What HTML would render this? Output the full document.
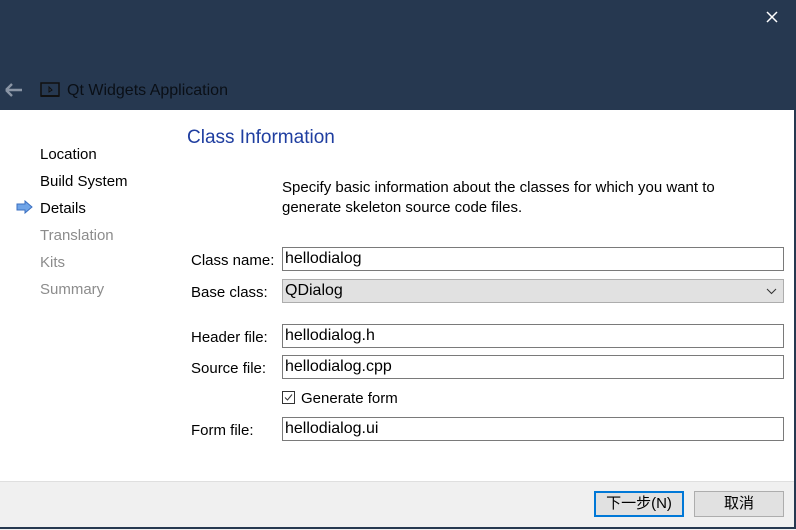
<!DOCTYPE html><html><head><meta charset="utf-8"><style>
body{margin:0;width:796px;height:529px;position:relative;overflow:hidden;background:#fff;font-family:"Liberation Sans","Noto Sans CJK SC",sans-serif;font-size:15px;color:#000}
.a{position:absolute}
.hdr{left:0;top:0;width:796px;height:110px;background:#263850}
.in{position:absolute;left:282px;width:500px;height:22px;border:1px solid #7a7a7a;background:#fff;box-sizing:content-box}
.in span{position:absolute;left:2px;top:2px;font-size:16px}
.lbl{position:absolute;left:191px;font-size:15px}
.nav{position:absolute;left:40px;font-size:15px}
.btn{position:absolute;top:491px;height:26px;width:90px;box-sizing:border-box;background:#e1e1e1;border:1px solid #adadad;text-align:center;line-height:24px;font-size:15px}
</style></head><body>
<div class="a hdr"></div>
<svg class="a" style="left:764px;top:9px" width="16" height="16"><path d="M3 3L13 13M13 3L3 13" stroke="#fff" stroke-width="1.5"/></svg>
<svg class="a" style="left:4px;top:82px" width="20" height="16"><path d="M2 8H18M2 8L8 2M2 8L8 14" stroke="#8a95a5" stroke-width="2.4" fill="none"/></svg>
<svg class="a" style="left:40px;top:82px" width="20" height="16"><rect x="1" y="1" width="18" height="13" fill="none" stroke="#111" stroke-width="1.5"/><rect x="1" y="13" width="18" height="2" fill="#111"/><path d="M9 5L9 10L12 8Z" fill="none" stroke="#111"/></svg>
<div class="a" style="left:67px;top:82px;font-size:16px;color:#0a0f16">Qt Widgets Application</div>
<div class="a" style="left:187px;top:127px;font-size:19px;color:#1f3ea0">Class Information</div>
<div class="nav" style="top:146px">Location</div>
<div class="nav" style="top:173px">Build System</div>
<svg class="a" style="left:16px;top:200px" width="18" height="14"><path d="M1 4H9V1L16 7L9 13V10H1Z" fill="#6fa4e8" stroke="#3b6fc0"/></svg>
<div class="nav" style="top:200px">Details</div>
<div class="nav" style="top:227px;color:#8c8c8c">Translation</div>
<div class="nav" style="top:254px;color:#8c8c8c">Kits</div>
<div class="nav" style="top:281px;color:#8c8c8c">Summary</div>
<div class="a" style="left:282px;top:178px;line-height:20px">Specify basic information about the classes for which you want to<br>generate skeleton source code files.</div>
<div class="lbl" style="top:252px">Class name:</div>
<div class="in" style="top:247px"><span>hellodialog</span></div>
<div class="lbl" style="top:284px">Base class:</div>
<div class="in" style="top:279px;background:#e1e1e1;border-color:#adadad"><span>QDialog</span>
<svg style="position:absolute;right:6px;top:8px" width="11" height="7"><path d="M1 1L5.5 5.5L10 1" stroke="#333" fill="none"/></svg></div>
<div class="lbl" style="top:329px">Header file:</div>
<div class="in" style="top:324px"><span>hellodialog.h</span></div>
<div class="lbl" style="top:360px">Source file:</div>
<div class="in" style="top:355px"><span>hellodialog.cpp</span></div>
<svg class="a" style="left:282px;top:391px" width="13" height="13"><rect x="0.5" y="0.5" width="12" height="12" fill="#fff" stroke="#333"/><path d="M3 6.5L5.5 9L10 3.5" stroke="#333" fill="none"/></svg>
<div class="a" style="left:301px;top:390px">Generate form</div>
<div class="lbl" style="top:422px">Form file:</div>
<div class="in" style="top:417px"><span>hellodialog.ui</span></div>
<div class="a" style="left:0;top:481px;width:796px;height:48px;background:#f0f0f0;border-top:1px solid #dfdfdf"></div>
<div class="btn" style="left:594px;border:2px solid #0078d7;line-height:22px">下一步(N)</div>
<div class="btn" style="left:694px">取消</div>
<div class="a" style="left:794px;top:110px;width:2px;height:419px;background:#263850"></div>
<div class="a" style="left:0;top:527px;width:796px;height:2px;background:#263850"></div>
</body></html>
